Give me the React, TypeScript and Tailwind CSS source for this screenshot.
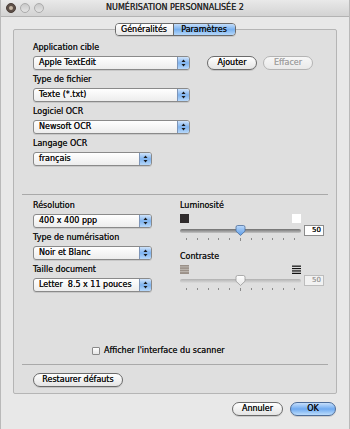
import React from 'react'

const font = { fontFamily: '"DejaVu Sans", "Liberation Sans", sans-serif' }

const Arrows = () => (
  <svg width="12" height="12" viewBox="0 0 12 12">
    <path d="M6 2.2 L8.2 4.8 H3.8 Z" fill="#1a1a1a" />
    <path d="M6 9.8 L8.2 7.2 H3.8 Z" fill="#1a1a1a" />
  </svg>
)

const Popup = ({ value, w }: { value: string; w: string }) => (
  <div className={`${w} h-[14px] flex rounded-[3px] border border-[#8a8a8a] bg-linear-to-b from-white to-[#ededed] shadow-[0_1px_0_rgba(0,0,0,0.1)] overflow-hidden`}>
    <div className="flex-1 pl-[5px] flex items-center text-[8px] leading-none text-[#141414] whitespace-pre">{value}</div>
    <div className="w-[12px] flex items-center justify-center border-l border-[#7d95b8] bg-linear-to-b from-[#cfe3fa] via-[#7fb3ee] to-[#b7d8fa]">
      <Arrows />
    </div>
  </div>
)

const Label = ({ children }: { children: React.ReactNode }) => (
  <div className="h-[12px] flex items-center text-[8px] leading-none text-[#1a1a1a]">{children}</div>
)

const PillButton = ({ label, w, disabled }: { label: string; w: string; disabled?: boolean }) => (
  <div
    className={`${w} h-[14px] flex items-center justify-center rounded-full border text-[8px] leading-none ${
      disabled
        ? 'border-[#b4b4b4] text-[#a3a3a3] bg-linear-to-b from-[#f7f7f7] to-[#e9e9e9]'
        : 'border-[#6a6a6a] text-[#141414] bg-linear-to-b from-white to-[#e4e4e4] shadow-[0_1px_0_rgba(0,0,0,0.12)]'
    }`}
  >
    {label}
  </div>
)

const Thumb = ({ active }: { active: boolean }) => (
  <svg width="11" height="11" viewBox="0 0 11 11" className="absolute left-[55px] top-0">
    <defs>
      <linearGradient id={active ? 'ta' : 'ti'} x1="0" y1="0" x2="0" y2="1">
        <stop offset="0" stopColor={active ? '#bcd9fb' : '#ffffff'} />
        <stop offset="1" stopColor={active ? '#5b9be6' : '#e6e6e6'} />
      </linearGradient>
    </defs>
    <path
      d="M1 2.2 Q1 0.5 2.7 0.5 H8.3 Q10 0.5 10 2.2 V6.2 L5.5 10.5 L1 6.2 Z"
      fill={`url(#${active ? 'ta' : 'ti'})`}
      stroke={active ? '#4d6e9c' : '#9a9a9a'}
      strokeWidth="0.8"
    />
  </svg>
)

const Slider = ({ active }: { active: boolean }) => (
  <div className="h-[11px] flex items-center">
    <div className="relative w-[121px] h-[11px] flex items-center">
      <div
        className={`w-full h-[4px] rounded-full ${
          active ? 'bg-linear-to-b from-[#6f6f6f] to-[#c4c4c4]' : 'bg-linear-to-b from-[#b0b0b0] to-[#dcdcdc]'
        }`}
      />
      <Thumb active={active} />
    </div>
    <div
      className={`ml-[3px] w-[20px] h-[11px] border flex items-center justify-end pr-[2px] text-[7px] leading-none ${
        active ? 'border-[#8c8c8c] bg-white text-[#111]' : 'border-[#bdbdbd] bg-[#f2f2f2] text-[#9d9d9d]'
      }`}
    >
      50
    </div>
  </div>
)

const Ticks = () => (
  <div className="w-[121px] h-[3px] px-[6px] flex justify-between items-start">
    {Array.from({ length: 11 }).map((_, i) => (
      <div key={i} className={`w-px bg-[#8a8a8a] ${i === 5 ? 'h-[3px]' : 'h-[2px]'}`} />
    ))}
  </div>
)

const Stripes = ({ dark }: { dark: boolean }) => (
  <svg width="9" height="9" viewBox="0 0 9 9">
    {dark ? (
      <>
        <rect x="0" y="0" width="9" height="9" fill="#f4f4f4" />
        <rect x="0" y="0.5" width="9" height="1.3" fill="#111" />
        <rect x="0" y="2.9" width="9" height="1.3" fill="#111" />
        <rect x="0" y="5.3" width="9" height="1.3" fill="#111" />
        <rect x="0" y="7.7" width="9" height="1.3" fill="#111" />
      </>
    ) : (
      <>
        <rect x="0" y="0" width="9" height="9" fill="#9a9088" />
        <rect x="0" y="1.5" width="9" height="0.8" fill="#c8c2bc" />
        <rect x="0" y="3.9" width="9" height="0.8" fill="#c8c2bc" />
        <rect x="0" y="6.3" width="9" height="0.8" fill="#c8c2bc" />
      </>
    )}
  </svg>
)

export default function App() {
  return (
    <div
      style={font}
      className="w-[350px] h-[429px] flex flex-col bg-[#e8e8e8] border-x border-[#b9b9b9] overflow-hidden [text-shadow:0_0_0.5px_currentColor]"
    >
      {/* Title bar */}
      <div className="relative h-[17px] flex items-center justify-center bg-linear-to-b from-[#e9e9e9] to-[#d3d3d3] border-b border-[#b3b3b3]">
        <div className="absolute left-[5px] top-[3px] flex gap-[4px]">
          <div className="w-[10px] h-[10px] rounded-full bg-[#5e5049] border border-[#4a3e38] flex items-center justify-center">
            <div className="w-[4px] h-[4px] rounded-full bg-[#c9b9a6]" />
          </div>
          <div className="w-[10px] h-[10px] rounded-full bg-linear-to-b from-[#c9c9c9] to-[#e4e4e4] border border-[#ababab]" />
          <div className="w-[10px] h-[10px] rounded-full bg-linear-to-b from-[#c9c9c9] to-[#e4e4e4] border border-[#ababab]" />
        </div>
        <div className="text-[8px] leading-none text-[#2a2a2a]">NUMÉRISATION PERSONNALISÉE 2</div>
      </div>

      <div className="px-[12px] flex flex-col">
        {/* Tabs */}
        <div className="relative z-10 mt-[6px] flex justify-center">
          <div className="h-[13px] flex rounded-[4px] border border-[#6a6a6a] overflow-hidden shadow-[0_1px_0_rgba(0,0,0,0.1)]">
            <div className="w-[58px] flex items-center justify-center text-[8px] leading-none text-[#111] bg-linear-to-b from-white to-[#e8e8e8] border-r border-[#6a6a6a]">
              Généralités
            </div>
            <div className="w-[61px] flex items-center justify-center text-[8px] leading-none text-[#111] bg-linear-to-b from-[#c3ddfa] via-[#79b1ef] to-[#b5d7f9]">
              Paramètres
            </div>
          </div>
        </div>

        {/* Group box */}
        <div className="-mt-[7px] h-[365px] flex flex-col border border-[#b5b5b5] rounded-[2px] bg-[#dfdfdf]">
          <div className="pt-[12px] pl-[19px] flex flex-col">
            <Label>Application cible</Label>
            <div className="mt-[2px] flex items-center">
              <Popup value="Apple TextEdit" w="w-[157px]" />
              <div className="ml-[17px]">
                <PillButton label="Ajouter" w="w-[50px]" />
              </div>
              <div className="ml-[6px]">
                <PillButton label="Effacer" w="w-[50px]" disabled />
              </div>
            </div>
            <div className="mt-[4px]">
              <Label>Type de fichier</Label>
            </div>
            <div className="mt-[2px]">
              <Popup value="Texte (*.txt)" w="w-[157px]" />
            </div>
            <div className="mt-[4px]">
              <Label>Logiciel OCR</Label>
            </div>
            <div className="mt-[2px]">
              <Popup value="Newsoft OCR" w="w-[157px]" />
            </div>
            <div className="mt-[4px]">
              <Label>Langage OCR</Label>
            </div>
            <div className="mt-[2px]">
              <Popup value="français" w="w-[119px]" />
            </div>
          </div>

          <div className="mt-[28px] mx-[8px] h-px bg-[#a9a9a9]" />

          <div className="mt-[5px] pl-[19px] flex">
            <div className="w-[119px] flex flex-col">
              <Label>Résolution</Label>
              <div className="mt-[2px]">
                <Popup value="400 x 400 ppp" w="w-[119px]" />
              </div>
              <div className="mt-[4px]">
                <Label>Type de numérisation</Label>
              </div>
              <div className="mt-[2px]">
                <Popup value="Noir et Blanc" w="w-[119px]" />
              </div>
              <div className="mt-[4px]">
                <Label>Taille document</Label>
              </div>
              <div className="mt-[2px]">
                <Popup value="Letter  8.5 x 11 pouces" w="w-[119px]" />
              </div>
            </div>

            <div className="ml-[28px] flex flex-col">
              <Label>Luminosité</Label>
              <div className="mt-[2px] w-[121px] flex justify-between">
                <div className="w-[9px] h-[9px] bg-[#2e2a2b]" />
                <div className="w-[9px] h-[9px] bg-white" />
              </div>
              <div className="mt-[2px]">
                <Slider active />
              </div>
              <div className="mt-[2px]">
                <Ticks />
              </div>
              <div className="mt-[10px]">
                <Label>Contraste</Label>
              </div>
              <div className="mt-[2px] w-[121px] flex justify-between">
                <Stripes dark={false} />
                <Stripes dark />
              </div>
              <div className="mt-[1px]">
                <Slider active={false} />
              </div>
              <div className="mt-[2px]">
                <Ticks />
              </div>
            </div>
          </div>

          <div className="mt-auto flex flex-col">
            <div className="pl-[78px] h-[10px] flex items-center gap-[4px]">
              <div className="w-[8px] h-[8px] border border-[#8a8a8a] bg-linear-to-b from-white to-[#e6e6e6] rounded-[1px]" />
              <div className="text-[8px] leading-none text-[#1a1a1a]">Afficher l'interface du scanner</div>
            </div>
            <div className="mt-[8px] mx-[8px] h-px bg-[#a9a9a9]" />
            <div className="mt-[8px] mb-[6px] pl-[19px]">
              <PillButton label="Restaurer défauts" w="w-[90px]" />
            </div>
          </div>
        </div>

        {/* Dialog buttons */}
        <div className="mt-[8px] flex justify-end gap-[7px] pr-[1px]">
          <PillButton label="Annuler" w="w-[51px]" />
          <div className="w-[46px] h-[14px] flex items-center justify-center rounded-full border border-[#4d6c98] text-[8px] leading-none text-[#111] bg-linear-to-b from-[#c6dffb] via-[#6faaf0] to-[#bcdcfb] shadow-[0_1px_0_rgba(0,0,0,0.12)]">
            OK
          </div>
        </div>
      </div>
    </div>
  )
}
